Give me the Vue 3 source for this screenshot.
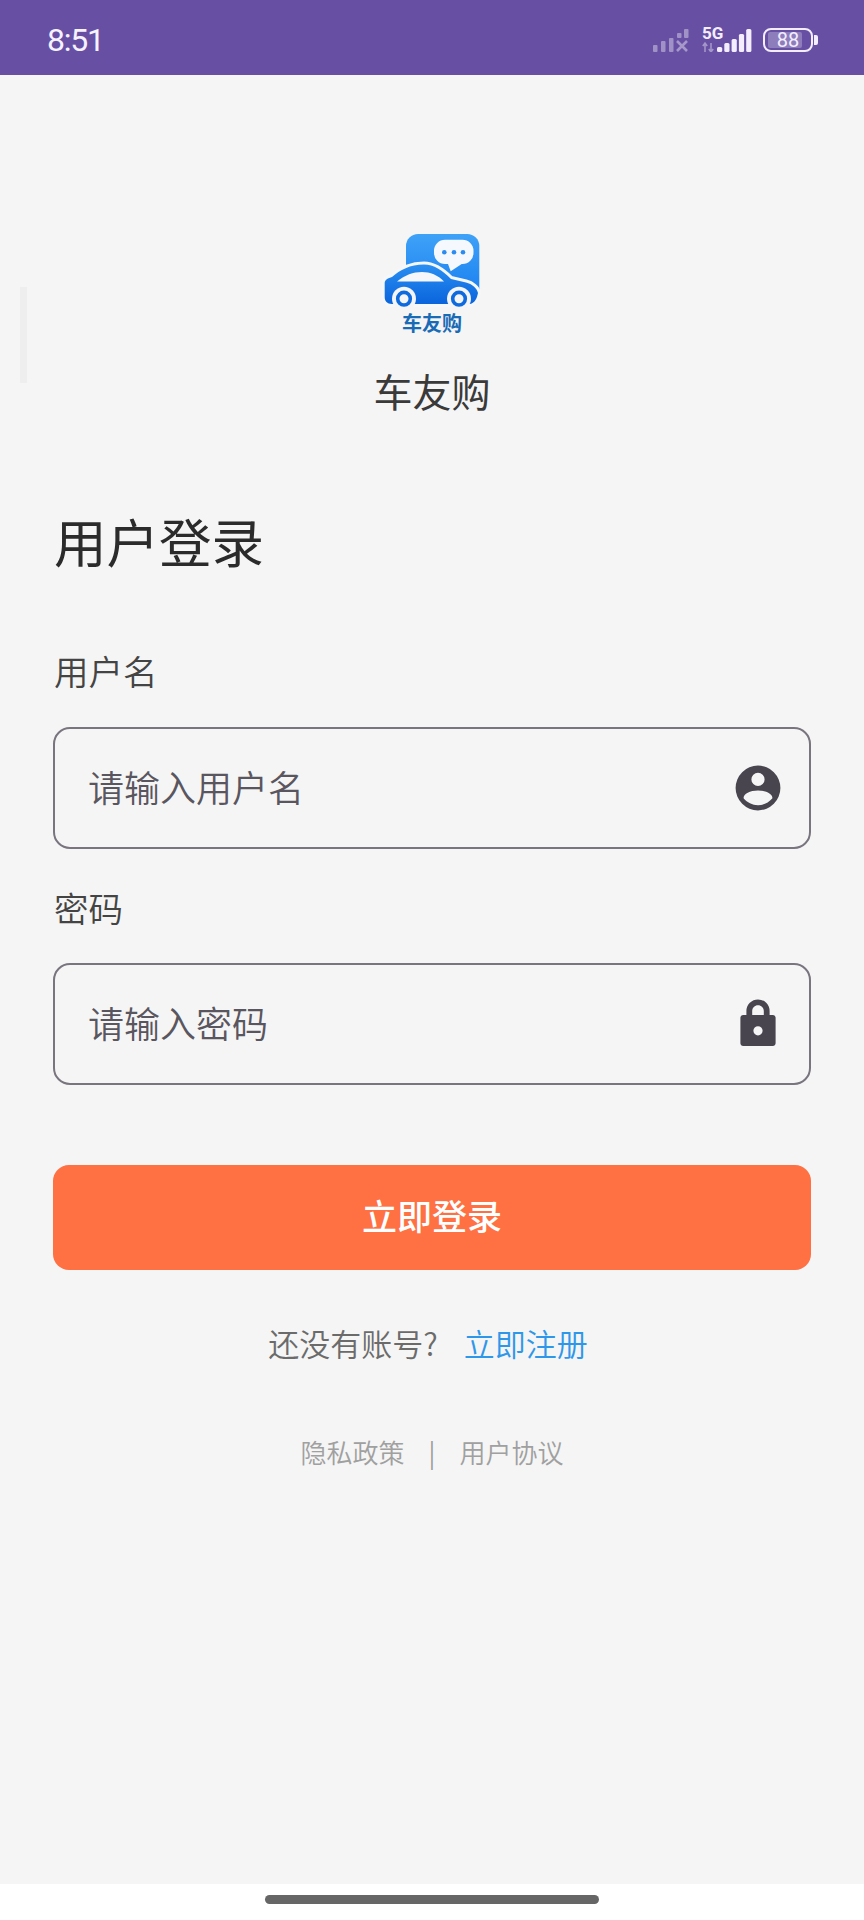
<script setup>
const offBars = [
  { x: 0, y: 17, h: 7 },
  { x: 8, y: 13, h: 11 },
  { x: 16, y: 10, h: 14 },
  { x: 24, y: 5, h: 5 },
  { x: 31, y: 1, h: 9 },
]
const onBars = [5, 9, 13, 18, 23]
</script>

<template>
  <div class="page">
    <header class="status">
      <span class="time">8:51</span>
      <div class="status-icons">
        <svg class="sig-off" width="36" height="24" viewBox="0 0 36 24">
          <rect v-for="b in offBars" :key="b.x" :x="b.x" :y="b.y" width="4.500" :height="b.h" rx="1" fill="#fff" fill-opacity=".38" />
          <path d="M24 13l10 10M34 13L24 23" stroke="#fff" stroke-opacity=".42" stroke-width="2.600" fill="none" />
        </svg>
        <div class="sig-on">
          <span class="five-g">5G</span>
          <svg width="50" height="24" viewBox="0 0 50 24" class="sig-bars">
            <path d="M3 15v9M.8 18l2.200-3 2.200 3M9 15v9M6.800 21l2.200 3 2.200-3" stroke="#fff" stroke-opacity=".4" stroke-width="1.600" fill="none" />
            <rect v-for="(h, i) in onBars" :key="i" :x="15 + i * 7.300" :y="24 - h" width="5.200" :height="h" rx="1.500" fill="#f3edff" />
          </svg>
        </div>
        <div class="battery">
          <div class="battery-body"><span class="battery-fill"></span><span class="battery-num">88</span></div>
          <span class="battery-cap"></span>
        </div>
      </div>
    </header>

    <main class="main">
      <span class="scroll-thumb"></span>
      <div class="brand">
        <svg class="logo" width="104" height="110" viewBox="0 0 104 110">
          <defs>
            <linearGradient id="sq" x1="0" y1="0" x2="0" y2="1">
              <stop offset="0" stop-color="#3fa2f8" />
              <stop offset="1" stop-color="#1a80f0" />
            </linearGradient>
            <linearGradient id="car" x1="0" y1="0" x2="0" y2="1">
              <stop offset="0" stop-color="#2a8ff2" />
              <stop offset="1" stop-color="#0a64dc" />
            </linearGradient>
          </defs>
          <path d="M38 6h49.300a12 12 0 0 1 12 12v48H26V18a12 12 0 0 1 12-12z" fill="url(#sq)" />
          <path d="M65 11.700h17.500a11 11 0 0 1 11 11v2.300a11 11 0 0 1-11 11H81.700L70.700 43.300 68 36h-3a11 11 0 0 1-11-11v-2.300a11 11 0 0 1 11-11z" fill="#f5f8fd" />
          <circle cx="64.300" cy="24.300" r="2.300" fill="#2a8bf0" />
          <circle cx="74" cy="24.300" r="2.300" fill="#2a8bf0" />
          <circle cx="83" cy="24.300" r="2.300" fill="#2a8bf0" />
          <path class="car-halo" d="M4.700 55C4.700 52 8 50 12 49 20 42 30 36.500 44 36.500 54 36.500 62 42 71 51L86 54.500C92 56 97 60 98 65 97 70 95 75 90 76H12C7 76 4.700 73 4.700 69Z" />
          <path d="M4.700 55C4.700 52 8 50 12 49 20 42 30 36.500 44 36.500 54 36.500 62 42 71 51L86 54.500C92 56 97 60 98 65 97 70 95 75 90 76H12C7 76 4.700 73 4.700 69Z" fill="url(#car)" />
          <path d="M17 53.500C25 47 33 44 42 44 50 44 58 47 64 53.500Z" fill="#f5f7fb" />
          <circle cx="24" cy="70.700" r="12" fill="#f5f5f5" />
          <circle cx="24" cy="70.700" r="6.300" fill="none" stroke="#0e6bdf" stroke-width="3.600" />
          <circle cx="79" cy="70.700" r="12" fill="#f5f5f5" />
          <circle cx="79" cy="70.700" r="6.300" fill="none" stroke="#0e6bdf" stroke-width="3.600" />
          <text x="52" y="102.500" text-anchor="middle" class="logo-text">车友购</text>
        </svg>
        <h2 class="app-name">车友购</h2>
      </div>

      <section class="form">
        <h1 class="title">用户登录</h1>

        <label class="label">用户名</label>
        <div class="field">
          <span class="placeholder">请输入用户名</span>
          <svg class="field-icon" width="48" height="48" viewBox="0 0 24 24">
            <path fill="#49454f" fill-rule="evenodd" d="M12 .8a11.200 11.200 0 1 0 0 22.400A11.200 11.200 0 0 0 12 .8zm0 3.600a3.300 3.300 0 1 1 0 6.600 3.300 3.300 0 0 1 0-6.600zm0 8.800c4 0 7.200 1.700 7.200 3.700 0 .2 0 .3-.1.400-1.700 2-4.200 3.300-7.100 3.300s-5.400-1.300-7.100-3.300c-.1-.1-.1-.2-.1-.4 0-2 3.200-3.700 7.200-3.700z" />
          </svg>
        </div>

        <label class="label label-pass">密码</label>
        <div class="field">
          <span class="placeholder">请输入密码</span>
          <svg class="field-icon lock" width="48" height="48" viewBox="0 0 24 24">
            <path fill="#49454f" fill-rule="evenodd" d="M12 .2A5.800 5.800 0 0 0 6.200 6v2H4.600c-.8 0-1.400.6-1.400 1.400v12.700c0 .8.600 1.400 1.400 1.400h14.800c.8 0 1.400-.6 1.400-1.400V9.400c0-.8-.6-1.400-1.400-1.400h-1.600V6A5.800 5.800 0 0 0 12 .2zm0 2.900c1.600 0 2.900 1.300 2.900 2.900v2H9.100V6c0-1.600 1.300-2.900 2.900-2.900zm0 10.500a2.300 2.300 0 1 1 0 4.600 2.300 2.300 0 0 1 0-4.600z" />
          </svg>
        </div>

        <button class="submit">立即登录</button>

        <p class="register">还没有账号?<a class="link">立即注册</a></p>

        <p class="legal">
          <span>隐私政策</span>
          <span class="sep">|</span>
          <span>用户协议</span>
        </p>
      </section>
    </main>

    <footer class="nav">
      <span class="nav-pill"></span>
    </footer>
  </div>
</template>

<style scoped>
.page {
  width: 864px;
  height: 1920px;
  display: flex;
  flex-direction: column;
  background: #f5f5f5;
  font-family: "Noto Sans CJK SC", "Noto Sans", sans-serif;
  overflow: hidden;
}
.status {
  height: 75px;
  flex: none;
  background: #6750a4;
  display: flex;
  align-items: center;
  justify-content: space-between;
  padding: 5px 46px 0 47px;
  box-sizing: border-box;
  color: #fff;
}
.time {
  font-family: Roboto, sans-serif;
  font-weight: 400;
  font-size: 32px;
  letter-spacing: -1.200px;
  line-height: 36px;
  color: #f6f2ff;
}
.status-icons {
  display: flex;
  align-items: center;
}
.sig-off {
  display: block;
  margin-right: 13px;
}
.sig-on {
  position: relative;
  width: 50px;
  height: 24px;
  margin-right: 11px;
}
.five-g {
  position: absolute;
  left: 0;
  top: -4px;
  font-family: Roboto, sans-serif;
  font-weight: 700;
  font-size: 17px;
  line-height: 18px;
  color: #f3edff;
}
.sig-bars {
  display: block;
}
.battery {
  display: flex;
  align-items: center;
  gap: 1px;
}
.battery-body {
  position: relative;
  width: 50px;
  height: 24px;
  box-sizing: border-box;
  border: 2.500px solid #f3edff;
  border-radius: 8px;
  display: flex;
  align-items: center;
  justify-content: center;
}
.battery-fill {
  position: absolute;
  left: 3px;
  top: 2px;
  bottom: 2px;
  width: 34px;
  background: rgba(255, 255, 255, 0.26);
  border-radius: 2px;
}
.battery-num {
  position: relative;
  font-family: Roboto, sans-serif;
  font-size: 20px;
  line-height: 18px;
  color: #f3edff;
}
.battery-cap {
  width: 4px;
  height: 10px;
  background: #f3edff;
  border-radius: 0 2px 2px 0;
}
.main {
  position: relative;
  flex: 1;
  min-height: 0;
}
.scroll-thumb {
  position: absolute;
  left: 20px;
  top: 212px;
  width: 7px;
  height: 96px;
  background: #eeeeee;
}
.brand {
  display: flex;
  flex-direction: column;
  align-items: center;
  padding-top: 153px;
}
.logo {
  display: block;
}
.car-halo {
  fill: #f5f7fb;
  stroke: #f5f7fb;
  stroke-width: 6;
  stroke-linejoin: round;
}
.logo-text {
  font-family: "Noto Sans CJK SC", sans-serif;
  font-weight: 700;
  font-size: 20px;
  fill: #1a6bb5;
}
.app-name {
  margin: 24px 0 0;
  font-weight: 400;
  font-size: 39px;
  line-height: 56px;
  color: #3a3a3a;
}
.form {
  padding: 0 53px;
  display: flex;
  flex-direction: column;
}
.title {
  margin: 86px 0 0 1px;
  font-weight: 400;
  font-size: 52.500px;
  line-height: 72px;
  color: #2b2b2b;
}
.label {
  margin: 70px 0 0 1px;
  font-weight: 350;
  font-size: 34.500px;
  line-height: 48px;
  color: #444;
}
.label-pass {
  margin-top: 34px;
}
.field {
  margin-top: 33px;
  height: 122px;
  box-sizing: border-box;
  border: 2px solid #79747e;
  border-radius: 17px;
  display: flex;
  align-items: center;
  justify-content: space-between;
  padding: 0 27px 0 33px;
}
.label-pass + .field {
  margin-top: 32px;
}
.placeholder {
  margin-bottom: 5px;
  font-weight: 350;
  font-size: 36px;
  line-height: 50px;
  color: #5a5660;
}
.lock {
  margin-bottom: 2px;
}
.submit {
  margin-top: 80px;
  height: 105px;
  border: 0;
  padding: 0 0 6px;
  border-radius: 16px;
  background: #ff7043;
  color: #fff;
  font-family: inherit;
  font-weight: 500;
  font-size: 35px;
}
.register {
  margin: 51px 0 0;
  padding-right: 8px;
  text-align: center;
  font-weight: 350;
  font-size: 31px;
  line-height: 44px;
  color: #6b6b6b;
}
.link {
  margin-left: 26px;
  color: #2f97ea;
}
.legal {
  margin: 68px 0 0;
  display: flex;
  justify-content: center;
  gap: 24px;
  font-weight: 350;
  font-size: 26px;
  line-height: 38px;
  color: #a0a0a0;
}
.sep {
  color: #999;
}
.nav {
  flex: none;
  height: 36px;
  background: #fff;
  display: flex;
  justify-content: center;
  padding-top: 11px;
  box-sizing: border-box;
}
.nav-pill {
  width: 334px;
  height: 9px;
  border-radius: 5px;
  background: #666;
}
</style>
